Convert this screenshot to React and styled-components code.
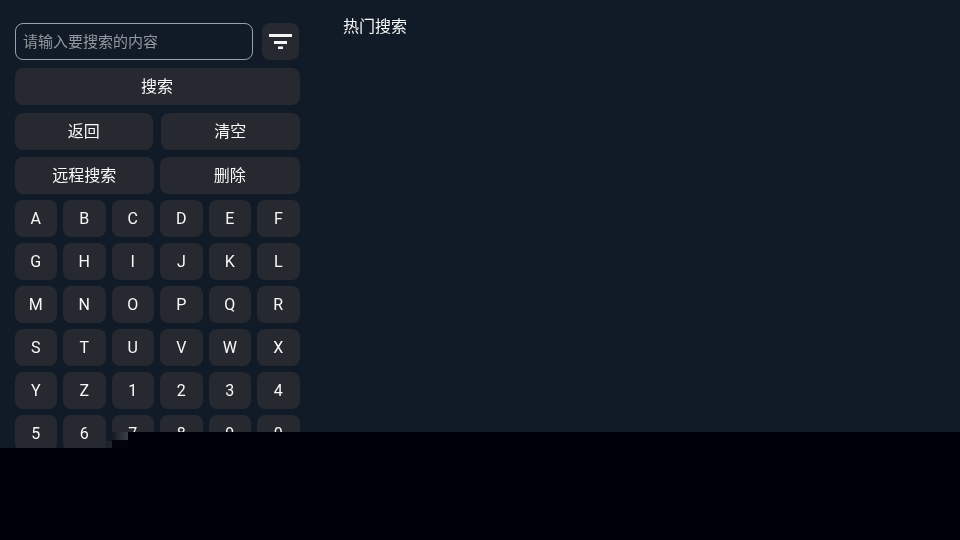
import React from 'react';
import styled, { createGlobalStyle } from 'styled-components';

const keys = 'ABCDEFGHIJKLMNOPQRSTUVWXYZ1234567890'.split('');

const GlobalStyle = createGlobalStyle`
  html, body {
    margin: 0;
    padding: 0;
    width: 960px;
    height: 540px;
    overflow: hidden;
    background: #101b27;
  }
  * { box-sizing: border-box; }
`;

const Screen = styled.div`
  position: relative;
  width: 960px;
  height: 540px;
  overflow: hidden;
  display: flex;
  background: #101b27;
  color: #fff;
  font-family: Roboto, "Noto Sans CJK SC", sans-serif;
  font-size: 16px;
`;

const LeftPanel = styled.div`
  margin-left: 14px;
  padding: 23px 0 0 0.9px;
  flex: none;
  width: 285.9px;
  display: flex;
  flex-direction: column;
  will-change: transform;
`;

const SearchRow = styled.div`
  display: flex;
  justify-content: space-between;
  height: 37px;
  margin-bottom: 8px;
  padding-right: 1px;
`;

const SearchInput = styled.div`
  width: 238px;
  height: 37px;
  border: 1px solid #9ba1a8;
  border-radius: 8px;
  padding: 0 0 2px 7px;
  display: flex;
  align-items: center;
  color: #94989e;
  font-size: 15px;
`;

const FilterButton = styled.div`
  width: 37px;
  height: 37px;
  border-radius: 8px;
  background: #26292f;
  display: flex;
  align-items: center;
  justify-content: center;
`;

const Button = styled.div`
  flex: 1;
  height: 37px;
  border-radius: 8px;
  background: #26292f;
  display: flex;
  align-items: center;
  justify-content: center;
  color: #f8f8f8;
  padding-right: 0.7px;
  padding-bottom: ${p => (p.$cjk ? 3 : 0)}px;
`;

const ButtonRow = styled.div`
  display: flex;
  gap: ${p => p.$gap}px;
  margin-bottom: ${p => p.$after}px;
`;

const KeyGrid = styled.div`
  display: grid;
  grid-template-columns: repeat(6, 1fr);
  grid-auto-rows: 37px;
  gap: 6px;
`;

const RightPanel = styled.div`
  flex: 1;
  padding: 16px 0 0 43.1px;
  line-height: 22px;
  color: #f8f8f8;
  will-change: transform;
`;

const BlackBar = styled.div`
  position: absolute;
  background: #00000a;
  left: ${p => p.$left}px;
  top: ${p => p.$top}px;
  right: 0;
  bottom: 0;
`;

// the broken tile where the black area starts
const Glitch = styled.div`
  position: absolute;
  left: 112px;
  top: 432px;
  width: 16px;
  height: 16px;
  background:
    linear-gradient(90deg, #14181f 0%, #2a2f36 50%, #3a4048 100%) top / 100% 8px no-repeat,
    #02030c;

  &::before {
    content: '';
    position: absolute;
    left: -7px;
    bottom: 0;
    width: 7px;
    height: 7px;
    background: repeating-linear-gradient(180deg, #1a2029 0 1px, #232830 1px 2px);
  }
`;

export default function App() {
  return (
    <Screen>
      <GlobalStyle />
      <LeftPanel>
        <SearchRow>
          <SearchInput>请输入要搜索的内容</SearchInput>
          <FilterButton>
            <svg width="23" height="15" viewBox="0 0 23 15">
              <rect x="0" y="0" width="23" height="3" fill="#f4f4f4" />
              <rect x="5" y="7" width="13" height="3" fill="#f4f4f4" />
              <rect x="9" y="12.5" width="5" height="2.5" fill="#f4f4f4" />
            </svg>
          </FilterButton>
        </SearchRow>
        <ButtonRow $gap={0} $after={8}><Button $cjk>搜索</Button></ButtonRow>
        <ButtonRow $gap={8} $after={7}><Button $cjk>返回</Button><Button $cjk>清空</Button></ButtonRow>
        <ButtonRow $gap={6} $after={6}><Button $cjk>远程搜索</Button><Button $cjk>删除</Button></ButtonRow>
        <KeyGrid>
          {keys.map(k => <Button key={k}>{k}</Button>)}
        </KeyGrid>
      </LeftPanel>
      <RightPanel>热门搜索</RightPanel>
      <BlackBar $left={128} $top={432} />
      <BlackBar $left={0} $top={448} />
      <Glitch />
    </Screen>
  );
}
